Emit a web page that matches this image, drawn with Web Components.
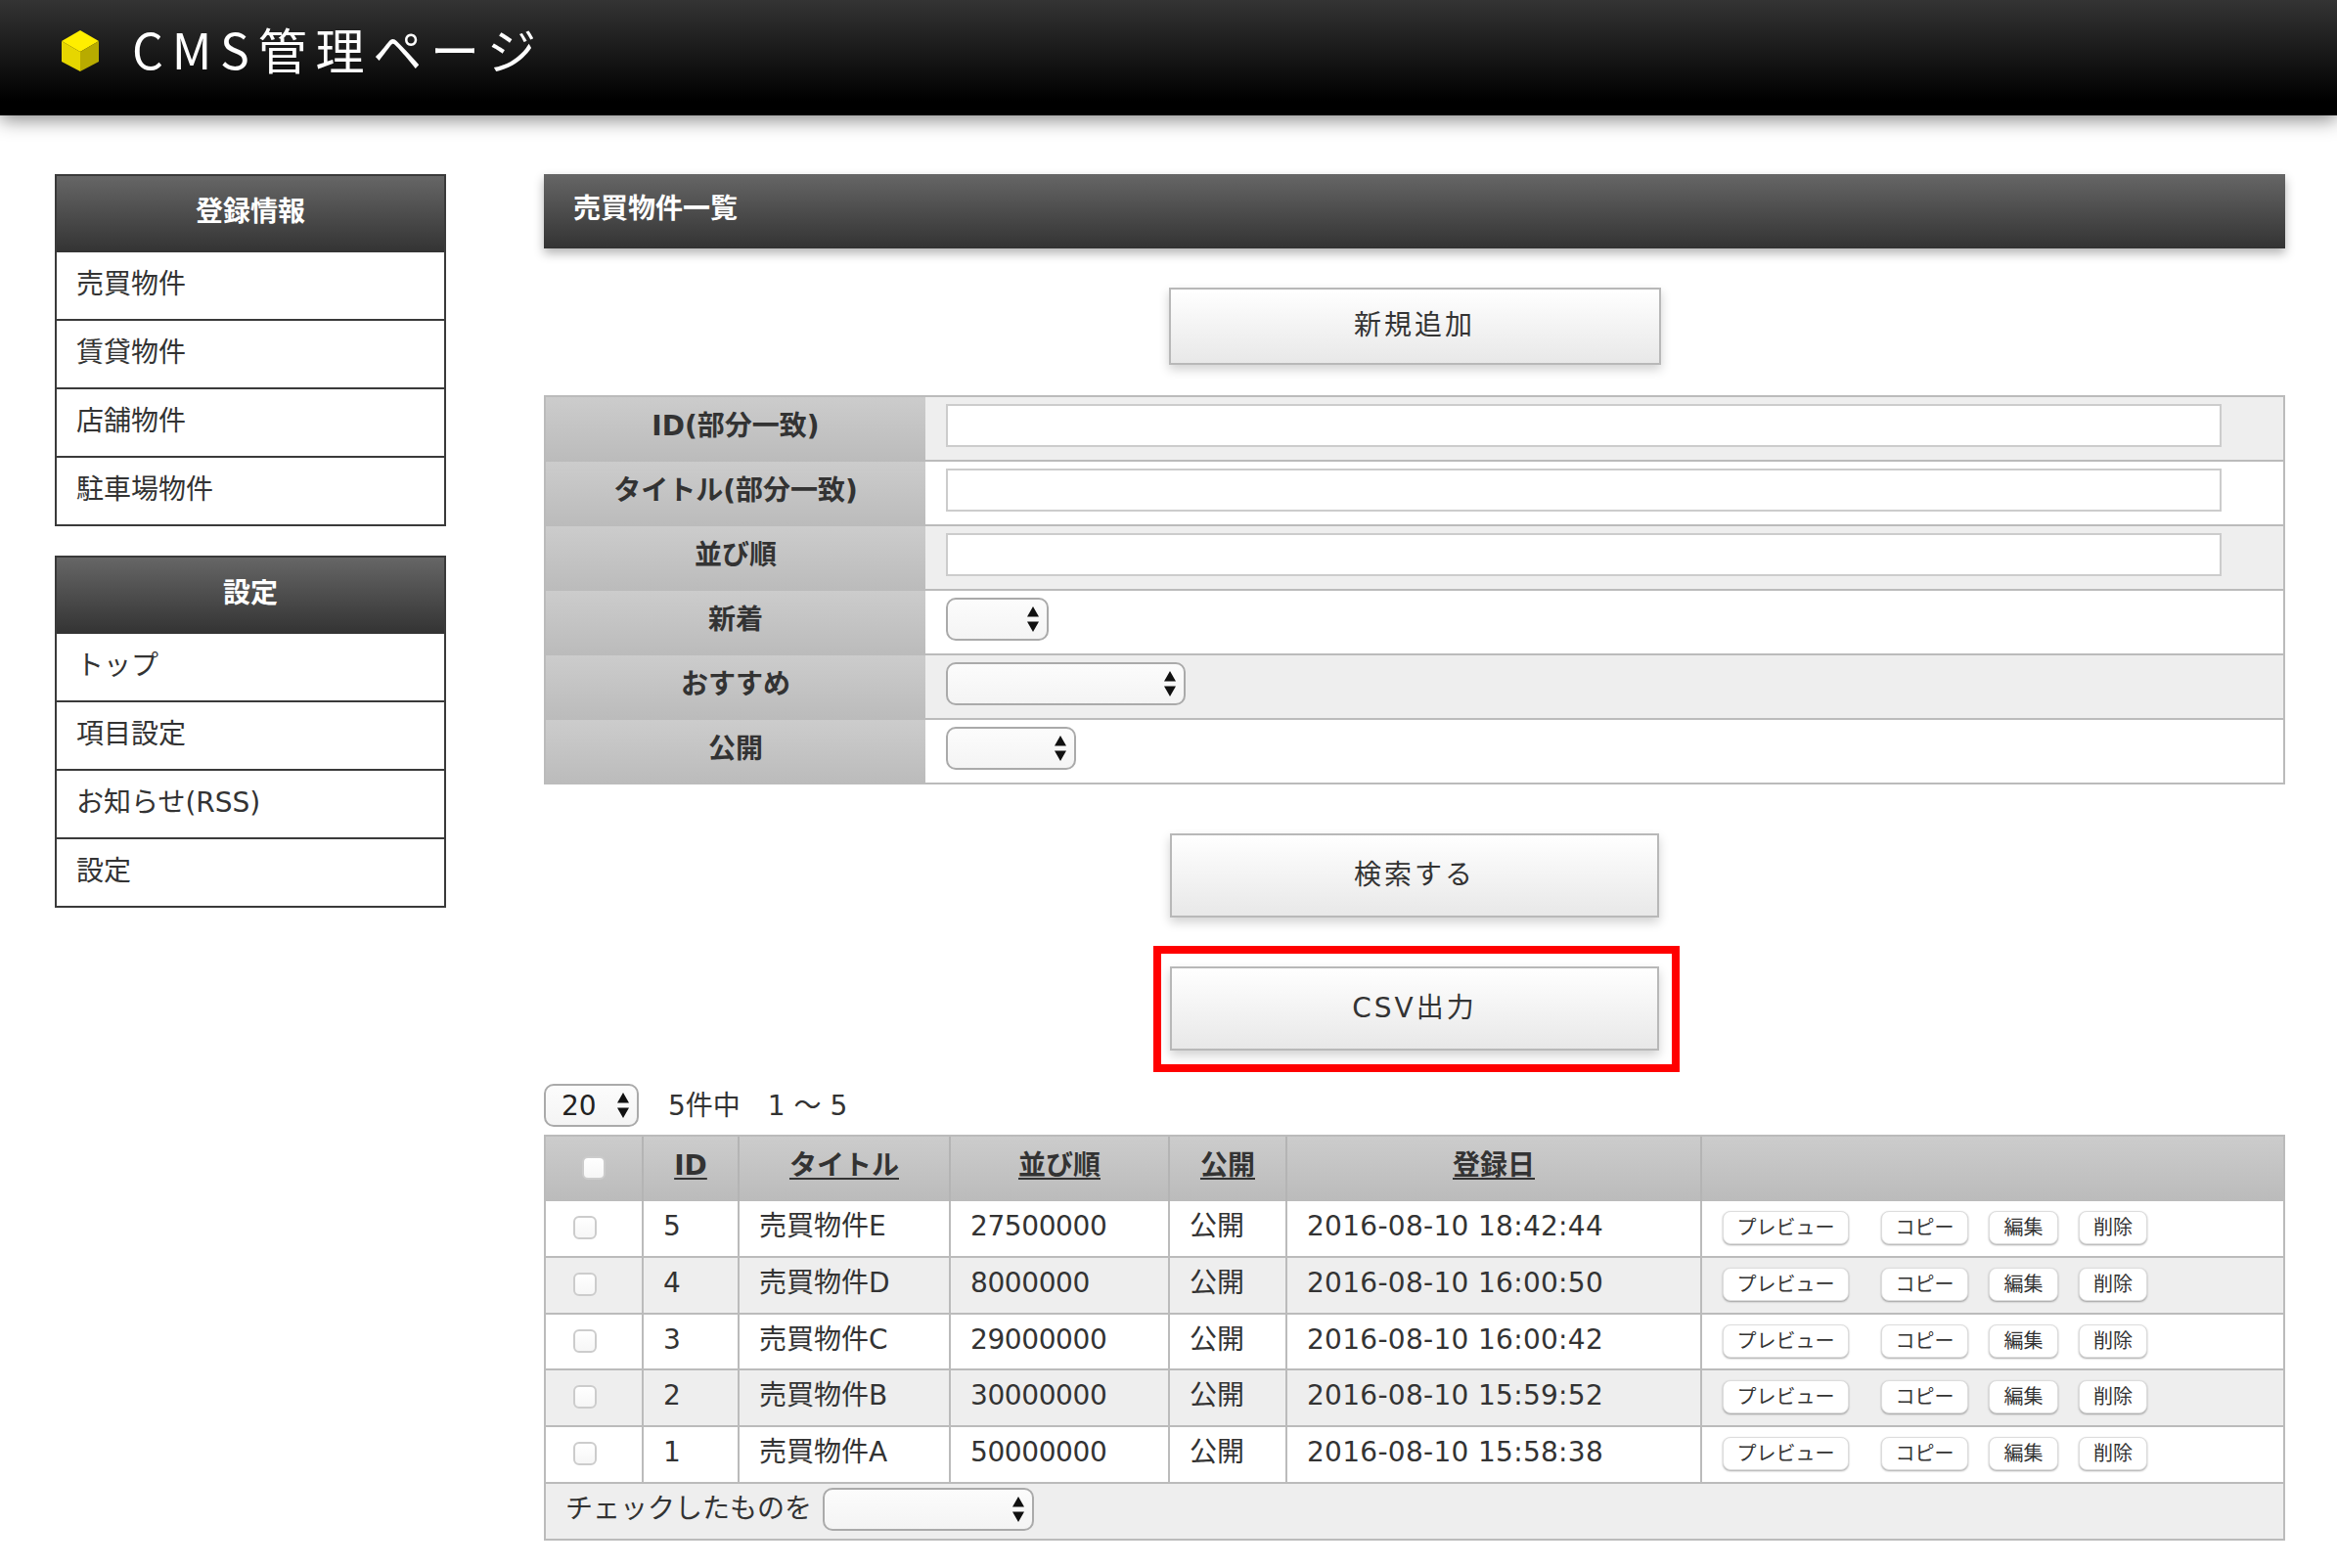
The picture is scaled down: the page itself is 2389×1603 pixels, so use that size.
<!DOCTYPE html>
<html lang="ja">
<head>
<meta charset="utf-8">
<title>CMS管理ページ</title>
<style>
html, body { margin: 0; padding: 0; background: #fff; }
body { font-family: "DejaVu Sans", "Noto Sans CJK JP", sans-serif; font-size: 28px; color: #333; }
</style>
</head>
<body>
<cms-page>
    <cms-header slot="header">CMS管理ページ</cms-header>

    <side-menu slot="side" heading="登録情報">
        <side-item>売買物件</side-item>
        <side-item>賃貸物件</side-item>
        <side-item>店舗物件</side-item>
        <side-item>駐車場物件</side-item>
    </side-menu>
    <side-menu slot="side" heading="設定">
        <side-item>トップ</side-item>
        <side-item>項目設定</side-item>
        <side-item>お知らせ(RSS)</side-item>
        <side-item>設定</side-item>
    </side-menu>

    <panel-title>売買物件一覧</panel-title>
    <big-button width="503" height="79" top="40">新規追加</big-button>

    <search-form>
        <search-row label="ID(部分一致)" alt><text-box></text-box></search-row>
        <search-row label="タイトル(部分一致)"><text-box></text-box></search-row>
        <search-row label="並び順" alt><text-box></text-box></search-row>
        <search-row label="新着"><pick-box width="105"></pick-box></search-row>
        <search-row label="おすすめ" alt><pick-box width="245"></pick-box></search-row>
        <search-row label="公開"><pick-box width="133"></pick-box></search-row>
    </search-form>

    <big-button width="500" height="86" top="50">検索する</big-button>
    <big-button width="500" height="86" top="50" marked>CSV出力</big-button>

    <page-info>
        <pick-box width="97" slot="size">20</pick-box>
        5件中　1 ～ 5
    </page-info>

    <list-table>
        <list-row num="5" name="売買物件E" order="27500000" state="公開" date="2016-08-10 18:42:44"></list-row>
        <list-row num="4" name="売買物件D" order="8000000" state="公開" date="2016-08-10 16:00:50" alt></list-row>
        <list-row num="3" name="売買物件C" order="29000000" state="公開" date="2016-08-10 16:00:42"></list-row>
        <list-row num="2" name="売買物件B" order="30000000" state="公開" date="2016-08-10 15:59:52" alt></list-row>
        <list-row num="1" name="売買物件A" order="50000000" state="公開" date="2016-08-10 15:58:38"></list-row>
        <pick-box width="216" slot="bulk"></pick-box>
    </list-table>
</cms-page>

<script>
// small helper, every element below is the same shape: a shadow root and a template string
function define(name, html) {
    class El extends HTMLElement {
        constructor() {
            super();
            this.attachShadow({mode: 'open'});
            this.shadowRoot.innerHTML = typeof html === 'function' ? html(this) : html;
        }
        connectedCallback() {
            // attributes are not there yet when the parser calls the constructor
            if (typeof html === 'function') this.shadowRoot.innerHTML = html(this);
        }
    }
    customElements.define(name, El);
}

define('cms-page', `
    <style>
        :host { display: block; }
        .body { display: flex; padding: 60px 53px 28px 56px; gap: 100px; }
        .side { flex: 0 0 400px; display: flex; flex-direction: column; gap: 30px; }
        .main { flex: 1 1 auto; min-width: 0; display: flex; flex-direction: column; }
    </style>
    <slot name="header"></slot>
    <div class="body">
        <div class="side"><slot name="side"></slot></div>
        <div class="main"><slot></slot></div>
    </div>
`);

define('cms-header', `
    <style>
        :host {
            display: flex; align-items: center; height: 118px; padding: 0 0 15px 62px; box-sizing: border-box;
            background: linear-gradient(#343434, #000 88%);
            box-shadow: 0 5px 18px rgba(0,0,0,.45);
            color: #fff; position: relative; z-index: 1;
        }
        svg { width: 40px; height: 42px; margin-right: 33px; flex: none; filter: blur(.4px); }
        span { font: 400 50px "Noto Sans CJK JP", sans-serif; letter-spacing: 8.8px; white-space: nowrap; margin-top: -5px; }
    </style>
    <svg viewBox="0 0 40 42">
        <polygon points="20,0 39,11 20,22 1,11" fill="#ffee00"/>
        <polygon points="1,11 20,22 20,42 1,32" fill="#e6d600"/>
        <polygon points="39,11 20,22 20,42 39,32" fill="#b8ab00"/>
    </svg>
    <span><slot></slot></span>
`);

define('side-menu', el => `
    <style>
        :host { display: block; border: 2px solid #3a3a3a; border-bottom-width: 0; }
        h2 {
            margin: 0; height: 78px; text-align: center;
            background: linear-gradient(#666, #333);
            color: #fff; font-size: 28px; font-weight: 700; line-height: 74px;
        }
    </style>
    <h2>${el.getAttribute('heading') || ''}</h2>
    <slot></slot>
`);

define('side-item', `
    <style>
        :host {
            display: block; height: 70px; box-sizing: border-box; padding-left: 20px;
            border-bottom: 2px solid #3a3a3a; line-height: 65px; background: #fff; color: #333;
        }
    </style>
    <slot></slot>
`);

define('panel-title', `
    <style>
        :host {
            display: block; height: 76px; box-sizing: border-box; padding-left: 30px;
            background: linear-gradient(#666, #333); color: #fff;
            font-weight: 700; line-height: 72px;
            box-shadow: 0 5px 10px rgba(0,0,0,.3);
        }
    </style>
    <slot></slot>
`);

define('big-button', el => `
    <style>
        :host { display: flex; justify-content: center; margin-top: ${el.getAttribute('top') || 0}px; }
        .wrap { position: relative; }
        .btn {
            width: ${el.getAttribute('width')}px; height: ${el.getAttribute('height')}px; box-sizing: border-box;
            display: flex; align-items: center; justify-content: center; padding-bottom: 7px;
            border: 2px solid #b8b8b8; background: linear-gradient(#fff, #e8e8e8);
            box-shadow: 0 5px 10px rgba(0,0,0,.18);
            letter-spacing: 3px; color: #333;
        }
        .mark { position: absolute; left: -17px; right: -21px; top: -21px; bottom: -22px; border: 8px solid #f00; }
    </style>
    <div class="wrap">
        <div class="btn"><slot></slot></div>
        ${el.hasAttribute('marked') ? '<div class="mark"></div>' : ''}
    </div>
`);

define('search-form', `
    <style>
        :host { display: block; margin-top: 31px; border: 2px solid #bbb; border-bottom-width: 0; }
    </style>
    <slot></slot>
`);

define('search-row', el => `
    <style>
        :host {
            display: grid; grid-template-columns: 388px 1fr; height: 66px; box-sizing: border-box;
            border-bottom: 2px solid #bbb;
            background: ${el.hasAttribute('alt') ? '#eee' : '#fff'};
        }
        .label {
            background: linear-gradient(#ccc, #bbb); font-weight: 700; text-align: center;
            line-height: 60px; margin-bottom: -2px; color: #333;
        }
        .field { padding: 7px 0 0 21px; }
    </style>
    <div class="label">${el.getAttribute('label')}</div>
    <div class="field"><slot></slot></div>
`);

define('text-box', `
    <style>
        :host { display: block; width: 1304px; height: 44px; box-sizing: border-box; border: 2px solid #ccc; background: #fff; }
    </style>
`);

define('pick-box', el => `
    <style>
        :host {
            display: inline-flex; align-items: center; width: ${el.getAttribute('width')}px; height: 44px; box-sizing: border-box;
            border: 2px solid #aaa; border-radius: 10px; background: linear-gradient(#fcfcfc, #f4f4f4);
            padding: 0 8px 0 16px; color: #222; vertical-align: top;
        }
        span { flex: 1; }
        svg { width: 12px; height: 26px; flex: none; }
    </style>
    <span><slot></slot></span>
    <svg viewBox="0 0 12 26"><path d="M6 0l6 10.500H0zM6 26L0 15.500h12z" fill="#111"/></svg>
`);

define('page-info', `
    <style>
        :host { display: flex; align-items: center; gap: 30px; height: 44px; margin-top: 34px; }
        span { white-space: nowrap; margin-top: -5px; }
    </style>
    <slot name="size"></slot>
    <span><slot></slot></span>
`);

const COLS = '100px 98px 216px 224px 120px 424px 1fr';

define('list-table', `
    <style>
        :host { display: block; margin-top: 8px; border: 2px solid #bbb; }
        .head {
            display: grid; grid-template-columns: ${COLS}; height: 66px;
            background: linear-gradient(#ccc, #bbb);
            font-weight: 700; text-align: center; line-height: 60px;
        }
        .head > div { border-right: 2px solid #b4b4b4; }
        .head > div:last-child { border-right: 0; }
        .head u { text-underline-offset: 3px; }
        .head .chk { display: flex; justify-content: center; padding-top: 20px; box-sizing: border-box; }
        .foot { display: flex; gap: 11px; height: 56px; padding-left: 20px; background: #eee; line-height: 52px; }
        .foot slot { display: block; padding-top: 4px; }
    </style>
    <div class="head">
        <div class="chk"><tick-box></tick-box></div>
        <div><u>ID</u></div><div><u>タイトル</u></div><div><u>並び順</u></div><div><u>公開</u></div><div><u>登録日</u></div><div></div>
    </div>
    <slot></slot>
    <div class="foot"><span>チェックしたものを</span><slot name="bulk"></slot></div>
`);

define('tick-box', `
    <style>
        :host {
            display: block; width: 24px; height: 24px; box-sizing: border-box; flex: none;
            border: 2px solid #ccc; border-radius: 6px; background: linear-gradient(#fff, #f6f6f6);
        }
    </style>
`);

define('list-row', el => `
    <style>
        :host {
            display: grid; grid-template-columns: ${COLS}; height: 57.8px; box-sizing: border-box;
            border-bottom: 2px solid #bbb;
            background: ${el.hasAttribute('alt') ? '#eee' : '#fff'};
            line-height: 52px;
        }
        .c { border-right: 2px solid #bbb; padding-left: 20px; white-space: nowrap; }
        .c:last-child { border-right: 0; }
        .chk { padding: 15px 0 0 28px; box-sizing: border-box; }
        .order { letter-spacing: -.4px; }
        .date { letter-spacing: .3px; }
        .acts { display: flex; padding: 10px 0 0 21px; }
        small-btn:nth-child(1) { width: 129px; margin-right: 33px; }
        small-btn:nth-child(2) { width: 89px; margin-right: 21px; }
        small-btn:nth-child(3) { width: 71px; margin-right: 21px; }
        small-btn:nth-child(4) { width: 70px; }
    </style>
    <div class="c chk"><tick-box></tick-box></div>
    <div class="c">${el.getAttribute('num')}</div>
    <div class="c">${el.getAttribute('name')}</div>
    <div class="c order">${el.getAttribute('order')}</div>
    <div class="c">${el.getAttribute('state')}</div>
    <div class="c date">${el.getAttribute('date')}</div>
    <div class="c acts">
        <small-btn>プレビュー</small-btn><small-btn>コピー</small-btn><small-btn>編集</small-btn><small-btn>削除</small-btn>
    </div>
`);

define('small-btn', `
    <style>
        :host {
            display: block; height: 34px; box-sizing: border-box; text-align: center;
            border: 1px solid #ddd; border-radius: 8px; background: #fff;
            box-shadow: 0 1px 2px rgba(0,0,0,.35);
            font-size: 20px; line-height: 32px; color: #333;
        }
    </style>
    <slot></slot>
`);
</script>
</body>
</html>
